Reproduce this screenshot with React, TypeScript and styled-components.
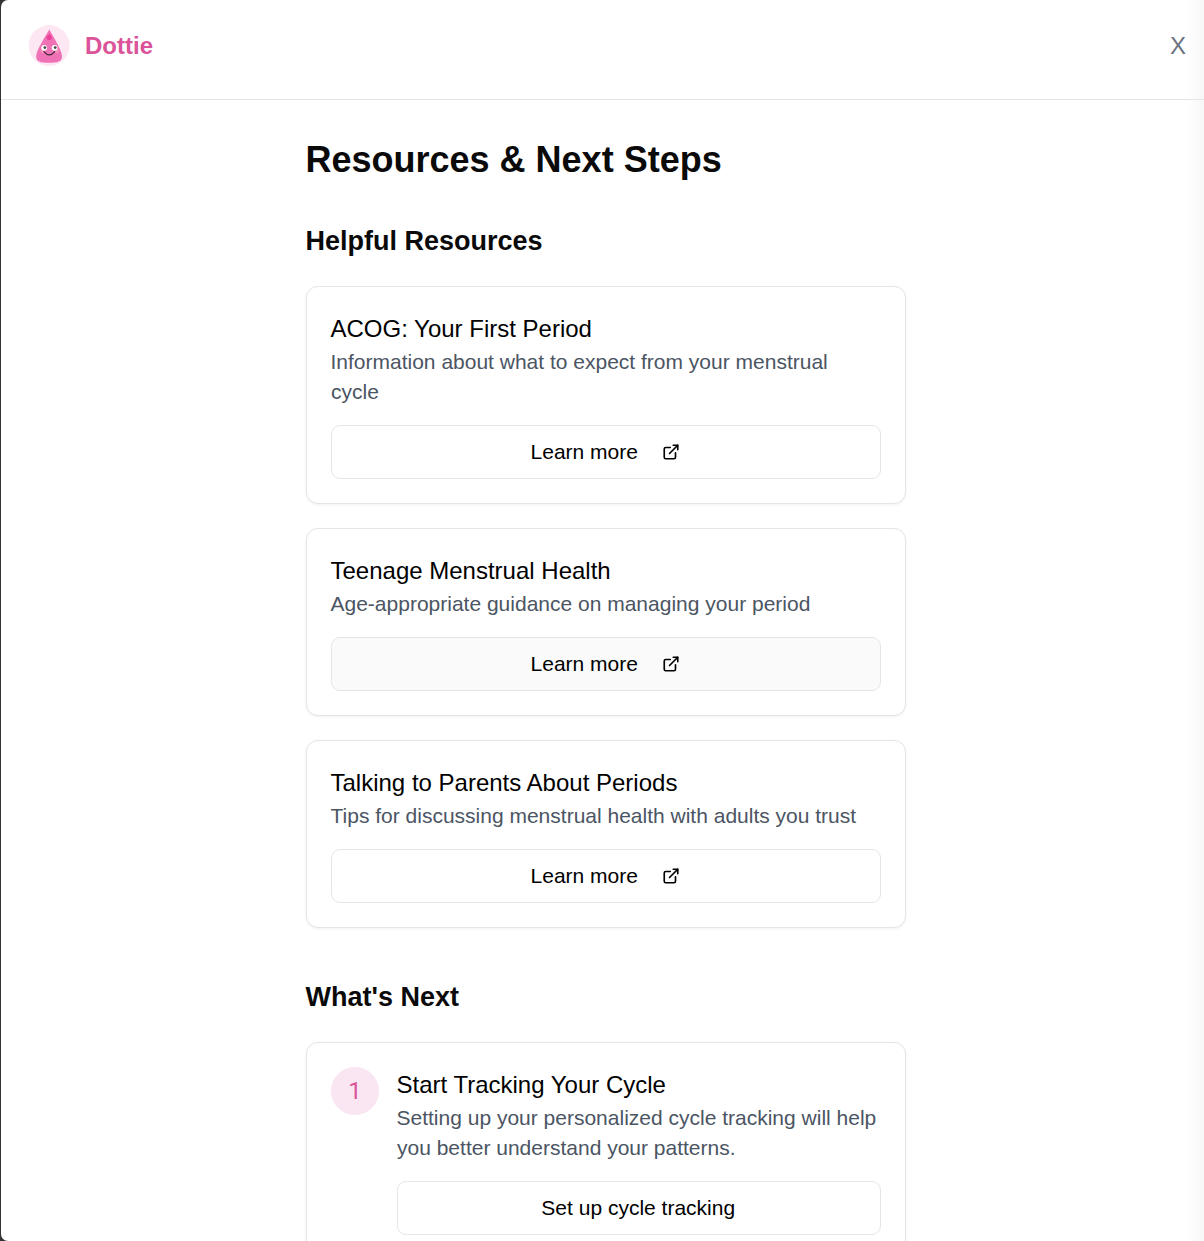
import React from "react";
import styled, { createGlobalStyle } from "styled-components";

const GlobalStyle = createGlobalStyle`
  *, *::before, *::after { box-sizing: border-box; }
  html, body { margin: 0; height: 1241px; overflow: hidden; background: #333336; }
  body { font-family: "Liberation Sans", Arial, sans-serif; color: #0a0a0a; }
  h1, h2, h3, p { margin: 0; }
`;

const Viewport = styled.div`
  height: 1241px;
  padding-left: 1px;
  overflow: hidden;
`;

const Panel = styled.div`
  width: 1210px;
  height: 1241px;
  overflow: hidden;
  border-radius: 7px;
  background: linear-gradient(to right, #fff 1180px, #fdfdfd 1190px, #f7f7f7 1203px);
`;

const Header = styled.header`
  display: flex;
  align-items: center;
  justify-content: space-between;
  height: 100px;
  padding: 0 25px 8px 27px;
  border-bottom: 1px solid #e5e5e5;
`;

const Brand = styled.div`
  display: flex;
  align-items: center;
  gap: 15px;
  color: #db5399;
  font-size: 24px;
  font-weight: 700;
  line-height: 36px;
`;

const CloseButton = styled.button`
  padding: 0;
  border: 0;
  background: none;
  color: #6b7280;
  font: 400 24px/36px "Liberation Sans", Arial, sans-serif;
`;

const Content = styled.main`
  width: 600px;
  margin: 0 auto;
  padding-top: 36px;
`;

const PageTitle = styled.h1`
  margin-bottom: 36px;
  font-size: 36px;
  line-height: 48px;
  text-indent: -0.5px;
`;

const Section = styled.section`
  margin-bottom: 48px;
`;

const SectionTitle = styled.h2`
  margin-bottom: 24px;
  font-size: 27px;
  line-height: 42px;
  text-indent: -0.5px;
`;

const CardList = styled.div`
  display: flex;
  flex-direction: column;
  gap: 24px;
`;

const Card = styled.article`
  display: flex;
  gap: 18px;
  padding: 24px;
  border: 1px solid #e5e5e5;
  border-radius: 12px;
  background: #fff;
  box-shadow: 0 1px 3px rgba(0, 0, 0, 0.06);
`;

const CardBody = styled.div`
  flex: 1;
  min-width: 0;
`;

const CardTitle = styled.h3`
  color: #000;
  font-size: 24px;
  font-weight: 400;
  line-height: 36px;
  text-indent: -0.5px;
`;

const Description = styled.p`
  color: #4b5563;
  font-size: 21px;
  line-height: 30px;
  text-indent: -0.5px;
`;

const ActionButton = styled.button<{ $hovered?: boolean }>`
  display: flex;
  align-items: center;
  justify-content: center;
  gap: 24px;
  width: 100%;
  height: 54px;
  margin-top: 18px;
  padding: 0 1.5px 0 0;
  border: 1px solid #e5e5e5;
  border-radius: 9px;
  background: ${(p) => (p.$hovered ? "#fafafa" : "#fff")};
  color: #000;
  font: 400 21px/30px "Liberation Sans", Arial, sans-serif;
`;

const StepBadge = styled.div`
  display: flex;
  flex: none;
  align-items: center;
  justify-content: center;
  width: 48px;
  height: 48px;
  border-radius: 50%;
  background: #f9e6f2;
  color: #db5399;
  font: 400 24px/36px Roboto, sans-serif;
`;

function Mascot() {
  return (
    <svg width="42" height="42" viewBox="0 0 42 42" aria-hidden="true">
      <circle cx="21.1" cy="20.6" r="20.5" fill="#fce7f3" />
      <path
        d="M21.3 4.6C18.2 10.4 8.2 25 8.2 31.4C8.2 36.2 12 37.8 21.1 37.8S34 36.2 34 31.4C34 25 24.4 10.4 21.3 4.6Z"
        fill="#f072b6"
      />
      <path d="M21.3 8.8C20.4 10.2 18.6 11.2 18.6 12.7C18.6 14.2 19.8 15.1 21.3 15.1S24 14.2 24 12.7C24 11.2 22.2 10.2 21.3 8.8Z" fill="#ec4099" />
      <circle cx="14.3" cy="26.1" r="2.1" fill="#f88fb6" />
      <circle cx="28.9" cy="26.1" r="2.1" fill="#f88fb6" />
      <circle cx="16.2" cy="22.8" r="2.9" fill="#fff" />
      <circle cx="26.6" cy="22.8" r="2.9" fill="#fff" />
      <circle cx="16.9" cy="22.6" r="1.4" fill="#444" />
      <circle cx="27.2" cy="22.6" r="1.4" fill="#444" />
      <path d="M16 26.7Q21.3 33.2 26.7 26.7" fill="none" stroke="#3b2832" strokeWidth="1.2" strokeLinecap="round" />
    </svg>
  );
}

function ExternalIcon() {
  return (
    <svg width="18" height="18" viewBox="0 0 24 24" fill="none" stroke="currentColor" strokeWidth="2.2" strokeLinecap="round" strokeLinejoin="round" aria-hidden="true">
      <path d="M18 13v6a2 2 0 0 1-2 2H5a2 2 0 0 1-2-2V8a2 2 0 0 1 2-2h6" />
      <path d="M15 3h6v6" />
      <path d="M10 14 21 3" />
    </svg>
  );
}

const resources = [
  { title: "ACOG: Your First Period", description: "Information about what to expect from your menstrual cycle" },
  { title: "Teenage Menstrual Health", description: "Age-appropriate guidance on managing your period", hovered: true },
  { title: "Talking to Parents About Periods", description: "Tips for discussing menstrual health with adults you trust" },
];

export default function App() {
  return (
    <Viewport>
      <GlobalStyle />
      <Panel>
        <Header>
          <Brand>
            <Mascot />
            Dottie
          </Brand>
          <CloseButton aria-label="Close">X</CloseButton>
        </Header>
        <Content>
          <PageTitle>Resources &amp; Next Steps</PageTitle>
          <Section>
            <SectionTitle>Helpful Resources</SectionTitle>
            <CardList>
              {resources.map((r) => (
                <Card key={r.title}>
                  <CardBody>
                    <CardTitle>{r.title}</CardTitle>
                    <Description>{r.description}</Description>
                    <ActionButton $hovered={r.hovered}>
                      Learn more
                      <ExternalIcon />
                    </ActionButton>
                  </CardBody>
                </Card>
              ))}
            </CardList>
          </Section>
          <Section>
            <SectionTitle>What's Next</SectionTitle>
            <CardList>
              <Card>
                <StepBadge>1</StepBadge>
                <CardBody>
                  <CardTitle>Start Tracking Your Cycle</CardTitle>
                  <Description>
                    Setting up your personalized cycle tracking will help you better understand your patterns.
                  </Description>
                  <ActionButton>Set up cycle tracking</ActionButton>
                </CardBody>
              </Card>
            </CardList>
          </Section>
        </Content>
      </Panel>
    </Viewport>
  );
}
